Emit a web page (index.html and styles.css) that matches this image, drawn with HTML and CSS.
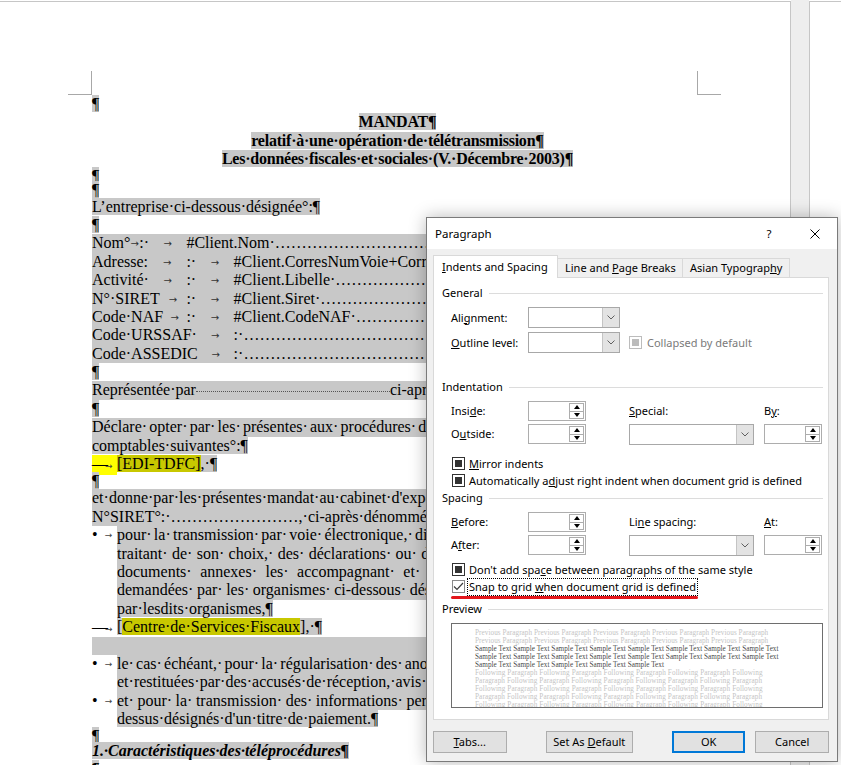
FILE: index.html
```html
<!DOCTYPE html>
<html lang="fr">
<head>
    <meta charset="UTF-8">
    <meta name="viewport" content="width=device-width, initial-scale=1.0">
    <title>Mandat de télétransmission - Paragraph</title>
    <link rel="stylesheet" href="styles.css">
</head>
<body>
    <div class="desk">
        <div class="page">
            <!-- margin corner marks -->
            <div class="page-head">
                <div class="corner corner-left"></div>
                <div class="corner corner-right"></div>
            </div>
            <div class="doc">
                <div class="ln"><span class="sel">¶</span></div>
                <div class="ln title"><span class="sel">MANDAT¶</span></div>
                <div class="ln title"><span class="sel">relatif·à·une·opération·de·télétransmission¶</span></div>
                <div class="ln title"><span class="sel">Les·données·fiscales·et·sociales·(V.·Décembre·2003)¶</span></div>
                <div class="ln short"><span class="sel">¶</span></div>
                <div class="ln short"><span class="sel">¶</span></div>
                <div class="ln"><span class="sel">L’entreprise·ci-dessous·désignée°:¶</span></div>
                <div class="ln"><span class="sel">¶</span></div>

                <div class="ln full field">Nom°<span class="tb">&#9;</span>:·<span class="tb">&#9;</span>#Client.Nom·……………………………</div>
                <div class="ln full field">Adresse:<span class="tb">&#9;</span>:·<span class="tb">&#9;</span>#Client.CorresNumVoie+CorresComplVoie</div>
                <div class="ln full field">Activité·<span class="tb">&#9;</span>:·<span class="tb">&#9;</span>#Client.Libelle·…………………………</div>
                <div class="ln full field">N°·SIRET<span class="tb">&#9;</span>:·<span class="tb">&#9;</span>#Client.Siret·……………………………</div>
                <div class="ln full field">Code·NAF<span class="tb">&#9;</span>:·<span class="tb">&#9;</span>#Client.CodeNAF·…………………………</div>
                <div class="ln full field">Code·URSSAF·<span class="tb">&#9;</span>:·……………………………………</div>
                <div class="ln full field">Code·ASSEDIC<span class="tb">&#9;</span>:·……………………………………</div>
                <div class="ln"><span class="sel">¶</span></div>
                <div class="ln full">Représentée·par<span class="leader"></span>ci-après·dénommée·"le·mandant",¶</div>
                <div class="ln"><span class="sel">¶</span></div>

                <div class="ln full jx2">Déclare· opter· par· les· présentes· aux· procédures· de· télétransmission· des· déclarations· fiscales· et</div>
                <div class="ln"><span class="sel">comptables·suivantes°:¶</span></div>
                <div class="ln"><span class="ltab hl-bright">—<span class="arrow">→</span></span><span class="hl">[EDI-TDFC]</span><span class="sel">,·¶</span></div>
                <div class="ln s16"><span class="sel">¶</span></div>
                <div class="ln full">et·donne·par·les·présentes·mandat·au·cabinet·d'expertise·comptable·…………………………</div>
                <div class="ln full">N°SIRET°:·……………………,·ci-après·dénommé·"le·mandataire"°:¶</div>

                <div class="ln item">
                    <span class="mark"><span class="bul">•</span><span class="gap">→</span></span>
                    <span class="txt full jx2">pour· la· transmission· par· voie· électronique,· directement· ou· par· l'intermédiaire· d'un· sous-</span>
                </div>
                <div class="ln hang full jx4">traitant· de· son· choix,· des· déclarations· ou· des· formulaires· de· demande,· ainsi· que· des</div>
                <div class="ln hang full jx8">documents· annexes· les· accompagnant· et· des· informations· qui· pourraient· être</div>
                <div class="ln hang full jx3">demandées· par· les· organismes· ci-dessous· désignés· dans· le· cadre· des· procédures· mises· en· place</div>
                <div class="ln hang"><span class="sel">par·lesdits·organismes,¶</span></div>
                <div class="ln"><span class="ltab">—<span class="arrow">→</span></span><span class="sel">[</span><span class="hl">Centre·de·Services·Fiscaux</span><span class="sel">],·¶</span></div>
                <div class="ln full"></div>

                <div class="ln item">
                    <span class="mark"><span class="bul">•</span><span class="gap">→</span></span>
                    <span class="txt full jx2">le· cas· échéant,· pour· la· régularisation· des· anomalies· constatées· lors· des· contrôles· effectués</span>
                </div>
                <div class="ln hang full">et·restituées·par·des·accusés·de·réception,·avis·de·rejet·ou·comptes-rendus·de·traitement,</div>
                <div class="ln item">
                    <span class="mark"><span class="bul">•</span><span class="gap">→</span></span>
                    <span class="txt full jx3">et· pour· la· transmission· des· informations· permettant· le· paiement· par· les· organismes· ci-</span>
                </div>
                <div class="ln hang"><span class="sel">dessus·désignés·d'un·titre·de·paiement.¶</span></div>
                <div class="ln xshort"><span class="sel">¶</span></div>
                <div class="ln heading"><span class="sel">1.·Caractéristiques·des·téléprocédures¶</span></div>
                <div class="ln"><span class="sel">¶</span></div>
            </div>
        </div>
        <div class="gutter"></div>
        <div class="page page-next"></div>
    </div>

    <!-- Paragraph dialog -->
    <div class="dialog">
        <div class="dlg-title">
            <span class="dlg-name">Paragraph</span>
            <span class="dlg-help">?</span>
            <span class="dlg-close">
                <svg width="10" height="10" viewBox="0 0 10 10"><path d="M0.5 0.5 L9.5 9.5 M9.5 0.5 L0.5 9.5" stroke="#000" stroke-width="1" fill="none"/></svg>
            </span>
        </div>
        <div class="dlg-body">
            <div class="tabs">
                <div class="tab active"><u>I</u>ndents and Spacing</div>
                <div class="tab tab-2">Line and <u>P</u>age Breaks</div>
                <div class="tab tab-3">Asian Typograp<u>h</u>y</div>
            </div>
            <div class="tab-page">
                <div class="grp grp-first">General</div>
                <div class="form form-general">
                    <span class="lbl">Ali<u>g</u>nment:</span>
                    <span class="combo"><span class="drop"><svg width="8" height="5" viewBox="0 0 8 5"><path d="M0.5 0.5 L4 4 L7.5 0.5" stroke="#606060" fill="none"/></svg></span></span>
                    <span></span><span></span>
                    <span class="lbl"><u>O</u>utline level:</span>
                    <span class="combo"><span class="drop"><svg width="8" height="5" viewBox="0 0 8 5"><path d="M0.5 0.5 L4 4 L7.5 0.5" stroke="#606060" fill="none"/></svg></span></span>
                    <span class="check-inline"><span class="chk mixed off"></span><span class="off-text">Collapsed by default</span></span>
                </div>

                <div class="grp grp-indent">Indentation</div>
                <div class="form form-spin">
                    <span class="lbl">Insi<u>d</u>e:</span>
                    <span class="spin"><span class="btns"><span class="up"></span><span class="down"></span></span></span>
                    <span class="lbl"><u>S</u>pecial:</span>
                    <span class="lbl">B<u>y</u>:</span>
                    <span class="lbl">O<u>u</u>tside:</span>
                    <span class="spin"><span class="btns"><span class="up"></span><span class="down"></span></span></span>
                    <span class="combo wide"><span class="drop"><svg width="8" height="5" viewBox="0 0 8 5"><path d="M0.5 0.5 L4 4 L7.5 0.5" stroke="#606060" fill="none"/></svg></span></span>
                    <span class="spin"><span class="btns"><span class="up"></span><span class="down"></span></span></span>
                </div>
                <div class="checks checks-indent">
                    <div class="check-row"><span class="chk mixed"></span><span><u>M</u>irror indents</span></div>
                    <div class="check-row"><span class="chk mixed"></span><span>Automatically a<u>d</u>just right indent when document grid is defined</span></div>
                </div>

                <div class="grp grp-spacing">Spacing</div>
                <div class="form form-spin">
                    <span class="lbl"><u>B</u>efore:</span>
                    <span class="spin"><span class="btns"><span class="up"></span><span class="down"></span></span></span>
                    <span class="lbl">Li<u>n</u>e spacing:</span>
                    <span class="lbl"><u>A</u>t:</span>
                    <span class="lbl">A<u>f</u>ter:</span>
                    <span class="spin"><span class="btns"><span class="up"></span><span class="down"></span></span></span>
                    <span class="combo wide"><span class="drop"><svg width="8" height="5" viewBox="0 0 8 5"><path d="M0.5 0.5 L4 4 L7.5 0.5" stroke="#606060" fill="none"/></svg></span></span>
                    <span class="spin"><span class="btns"><span class="up"></span><span class="down"></span></span></span>
                </div>
                <div class="checks checks-spacing">
                    <div class="check-row"><span class="chk mixed"></span><span>Don't add spa<u>c</u>e between paragraphs of the same style</span></div>
                    <div class="check-row">
                        <span class="chk checked"><svg width="11" height="9" viewBox="0 0 11 9"><path d="M1 4.5 L4 7.5 L10 1" stroke="#3c3c3c" stroke-width="1.2" fill="none"/></svg></span>
                        <span class="focus">Snap to grid <u>w</u>hen document grid is defined</span>
                    </div>
                </div>
                <div class="red-mark"></div>

                <div class="grp grp-preview">Preview</div>
                <div class="preview">
                    <div class="pv-prev">Previous Paragraph Previous Paragraph Previous Paragraph Previous Paragraph Previous Paragraph</div>
                    <div class="pv-prev">Previous Paragraph Previous Paragraph Previous Paragraph Previous Paragraph Previous Paragraph</div>
                    <div class="pv-cur">Sample Text Sample Text Sample Text Sample Text Sample Text Sample Text Sample Text Sample Text</div>
                    <div class="pv-cur">Sample Text Sample Text Sample Text Sample Text Sample Text Sample Text Sample Text Sample Text</div>
                    <div class="pv-cur">Sample Text Sample Text Sample Text Sample Text Sample Text</div>
                    <div class="pv-next">Following Paragraph Following Paragraph Following Paragraph Following Paragraph Following</div>
                    <div class="pv-next">Paragraph Following Paragraph Following Paragraph Following Paragraph Following Paragraph</div>
                    <div class="pv-next">Following Paragraph Following Paragraph Following Paragraph Following Paragraph Following</div>
                    <div class="pv-next">Paragraph Following Paragraph Following Paragraph Following Paragraph Following Paragraph</div>
                    <div class="pv-next">Following Paragraph Following Paragraph Following Paragraph Following Paragraph Following</div>
                </div>
            </div>
            <div class="dlg-buttons">
                <span class="btn btn-tabs"><span><u>T</u>abs...</span></span>
                <span class="btn btn-default"><span>Set As <u>D</u>efault</span></span>
                <span class="btn btn-ok">OK</span>
                <span class="btn btn-cancel">Cancel</span>
            </div>
        </div>
    </div>
</body>
</html>
```

FILE: styles.css
```css
:root {
    --select: #c8c8c8;
    --yellow: #ffff00;
    --yellow-sel: #c8c800;
    --page-line: #c6c6c6;
    --tab-line: #d9d9d9;
    --ctl-line: #adadad;
}
* {
    box-sizing: border-box;
}
body {
    margin: 0;
    height: 765px;
    overflow: hidden;
    position: relative;
    background: #fff;
    color: #000;
    font-family: "Liberation Serif", "Times New Roman", serif;
    font-size: 16px;
}

/* ---- document pages ---- */
.desk {
    display: flex;
    height: 100%;
}
.page {
    flex: 0 0 791px;
    margin-top: 1px;
    border-top: 1px solid var(--page-line);
    border-right: 1px solid var(--page-line);
    background: #fff;
    overflow: hidden;
}
.gutter {
    flex: 0 0 18px;
    background: #eeeeee;
}
.page-next {
    flex: 1;
    border-right: 0;
    border-left: 1px solid var(--page-line);
}
.page-head {
    display: flex;
    padding-top: 69px;
}
.corner {
    width: 24px;
    height: 24px;
    border-bottom: 1px solid #a8a8a8;
}
.corner-left {
    margin-left: 68px;
    border-right: 1px solid #a8a8a8;
}
.corner-right {
    margin-left: 605px;
    border-left: 1px solid #a8a8a8;
}
.doc {
    width: 703px;
    padding-left: 92px;
}
.ln {
    height: 18.4px;
    line-height: 18.4px;
    white-space: nowrap;
}
.ln.short {
    height: 14.5px;
    line-height: 14.5px;
}
.ln.xshort {
    height: 13.5px;
    line-height: 13.5px;
}
.ln.s16 {
    height: 16px;
    line-height: 16px;
}
.sel,
.full {
    background: var(--select);
}
.title {
    text-align: center;
    font-weight: bold;
    letter-spacing: -0.23px;
}
.heading {
    font-weight: bold;
    font-style: italic;
}

/* tab characters sit on the default 1.25cm stops */
.field {
    white-space: pre;
    tab-size: 47.2px;
}
.tb {
    position: relative;
}
.tb::after {
    content: "→";
    position: absolute;
    left: 50%;
    top: 1px;
    transform: translateX(-50%);
    font-family: "DejaVu Sans", sans-serif;
    font-size: 10px;
    color: #333;
}
.leader {
    display: inline-block;
    width: 194px;
    height: 0;
    border-bottom: 1px dotted #555;
    vertical-align: 3px;
}

/* justified lines: a real space after each space mark */
.jx2 { word-spacing: -1.8px; }
.jx3 { word-spacing: -0.5px; }
.jx4 { word-spacing: 0.3px; }
.jx8 { word-spacing: 4.5px; }

.ltab {
    display: inline-block;
    width: 25px;
    line-height: 18.4px;
}
.ltab .arrow {
    font-family: "DejaVu Sans", sans-serif;
    font-size: 9px;
    color: #444;
    margin-left: -3px;
}
.hl-bright {
    background: var(--yellow);
}
.hl {
    background: var(--yellow-sel);
}
.item {
    display: flex;
}
.item .mark {
    flex: 0 0 25px;
    display: flex;
}
.item .bul {
    width: 8px;
}
.item .gap {
    flex: 1;
    text-align: center;
    font-family: "DejaVu Sans", sans-serif;
    font-size: 9px;
    color: #444;
}
.item .txt {
    flex: 1;
}
.hang {
    margin-left: 25px;
}

/* ---- Paragraph dialog ---- */
.dialog {
    position: absolute;
    left: 426px;
    top: 217px;
    width: 412px;
    height: 545px;
    display: flex;
    flex-direction: column;
    background: #f0f0f0;
    border: 1px solid #7a7a7a;
    box-shadow: 0 0 16px rgba(0, 0, 0, 0.28);
    font-family: "Noto Sans", "Open Sans", sans-serif;
    font-size: 11px;
    line-height: 16px;
    color: #000;
}
.dlg-title {
    height: 31px;
    flex: 0 0 31px;
    display: flex;
    align-items: center;
    padding-left: 8px;
    background: #fff;
    font-size: 11.5px;
}
.dlg-name {
    flex: 1;
}
.dlg-help {
    width: 12px;
    text-align: center;
    margin-right: 18px;
}
.dlg-close {
    width: 44px;
    display: flex;
    justify-content: center;
}
.dlg-body {
    flex: 1;
    padding: 6px 8px 0 6px;
}
.tabs {
    display: flex;
    align-items: flex-end;
    height: 22px;
}
.tab {
    height: 19px;
    line-height: 18px;
    padding-left: 7px;
    border: 1px solid var(--tab-line);
    border-bottom: 0;
    background: #f0f0f0;
    white-space: nowrap;
}
.tabs .active {
    position: relative;
    z-index: 1;
    width: 125px;
    height: 23px;
    line-height: 22px;
    margin-bottom: -1px;
    padding-left: 8px;
    background: #fff;
}
.tab-2 {
    width: 126px;
    margin-left: -1px;
}
.tab-3 {
    width: 108px;
    margin-left: -1px;
}
.tab-page {
    height: 443px;
    padding: 0 5px 0 8px;
    border: 1px solid var(--tab-line);
    background: #fff;
}
.grp {
    display: flex;
    align-items: center;
    height: 16px;
}
.grp::after {
    content: "";
    flex: 1;
    height: 1px;
    margin-left: 6px;
    background: #dcdcdc;
}
.grp-first { margin-top: 7px; }
.grp-indent { margin-top: 26px; }
.grp-spacing { margin-top: 1px; }
.grp-preview { margin-top: 2px; }

.form {
    display: grid;
    grid-template-columns: 77px 101px 135px 58px;
    margin: 6px 0 0 9px;
    align-items: center;
}
.form-general {
    grid-auto-rows: 21px;
    row-gap: 4px;
}
.form-spin {
    grid-auto-rows: 20px;
    row-gap: 3px;
}
.lbl {
    white-space: nowrap;
}
.combo {
    align-self: start;
    width: 92px;
    height: 21px;
    display: flex;
    justify-content: flex-end;
    border: 1px solid #a8a8a8;
    background: #fff;
}
.combo.wide {
    width: 125px;
}
.drop {
    width: 17px;
    display: flex;
    align-items: center;
    justify-content: center;
    border-left: 1px solid #c4c4c4;
    background: #e3e3e3;
}
.spin {
    width: 58px;
    height: 20px;
    display: flex;
    justify-content: flex-end;
    padding: 1px;
    border: 1px solid var(--ctl-line);
    background: #fff;
}
.btns {
    width: 15px;
    display: flex;
    flex-direction: column;
}
.btns span {
    flex: 1;
    display: flex;
    align-items: center;
    justify-content: center;
    border: 1px solid var(--ctl-line);
}
.btns span + span {
    margin-top: -1px;
}
.btns .up::after,
.btns .down::after {
    content: "";
    border-left: 3px solid transparent;
    border-right: 3px solid transparent;
}
.btns .up::after {
    border-bottom: 4px solid #000;
}
.btns .down::after {
    border-top: 4px solid #000;
}
.check-inline {
    grid-column: 3 / 5;
    display: flex;
    align-items: center;
    gap: 5px;
}
.chk {
    flex: 0 0 13px;
    width: 13px;
    height: 13px;
    display: flex;
    align-items: center;
    justify-content: center;
    border: 1px solid #333;
    background: #fff;
}
.chk.mixed::after {
    content: "";
    width: 7px;
    height: 7px;
    background: #333;
}
.chk.off {
    border-color: #bcbcbc;
}
.chk.off::after {
    background: #bcbcbc;
}
.chk.checked {
    border-color: #8a8a8a;
}
.off-text {
    color: #7a7a7a;
}
.checks-indent { margin-top: 11px; }
.checks-spacing { margin-top: 6px; }
.check-row {
    height: 17px;
    display: flex;
    align-items: center;
    gap: 4px;
    margin-left: 10px;
    white-space: nowrap;
}
.focus {
    margin-left: -2px;
    padding: 0 1px;
    border: 1px dotted #000;
}
.red-mark {
    width: 247px;
    height: 3px;
    margin: 1px 0 0 9px;
    border-radius: 2px;
    background: #e3161b;
}
.preview {
    width: 372px;
    height: 85px;
    margin: 6px 0 0 9px;
    padding: 5px 0 0 23px;
    overflow: hidden;
    border: 1px solid #6e6e6e;
    background: #fff;
    font-family: "Liberation Serif", serif;
    font-size: 7.2px;
    line-height: 8px;
    white-space: nowrap;
}
.pv-prev {
    color: #c4c4c4;
    letter-spacing: 0.06px;
}
.pv-next {
    color: #c4c4c4;
    letter-spacing: 0.1px;
}
.pv-cur {
    color: #4a4a4a;
    letter-spacing: 0.04px;
}
.dlg-buttons {
    display: flex;
    margin-top: 11px;
}
.btn {
    width: 74px;
    height: 22px;
    display: flex;
    align-items: center;
    justify-content: center;
    border: 1px solid var(--ctl-line);
    background: #e1e1e1;
}
.btn-default {
    width: 88px;
    margin-left: 39px;
}
.btn-ok {
    margin-left: 39px;
    border: 2px solid #0078d7;
}
.btn-cancel {
    margin-left: 10px;
}
```
